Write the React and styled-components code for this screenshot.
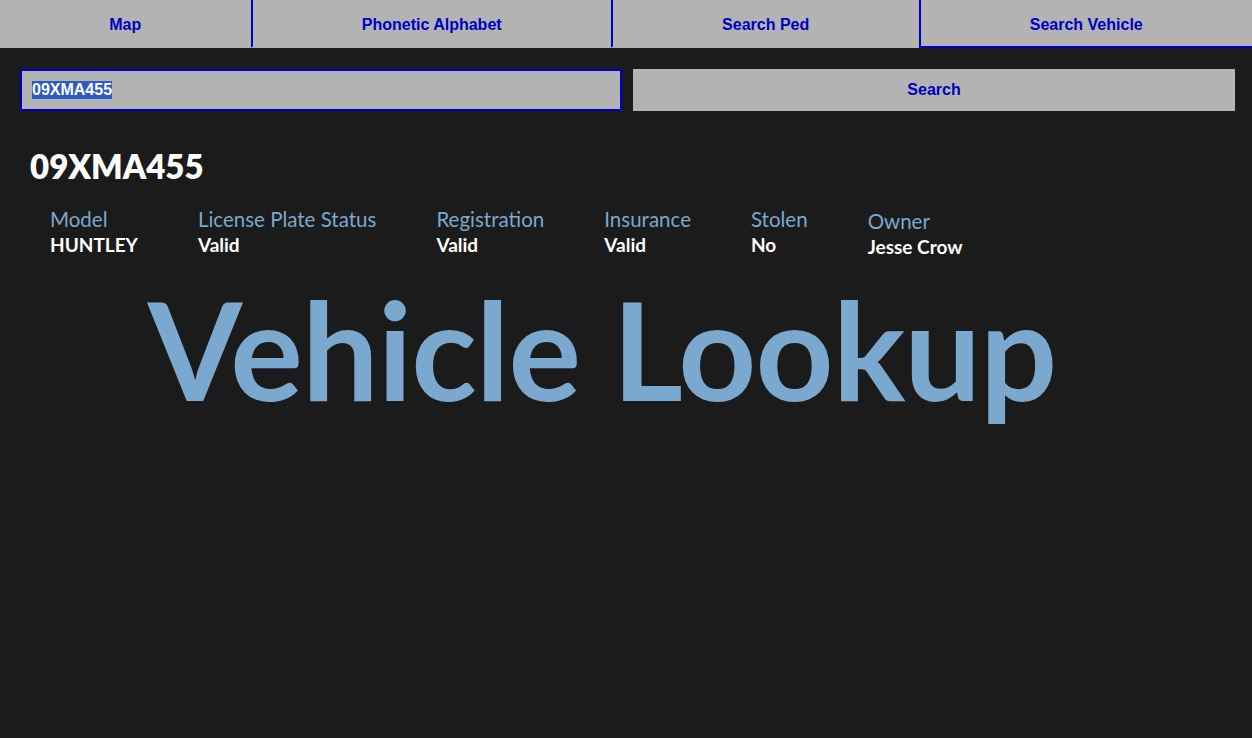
import React, { useEffect, useRef } from 'react';
import styled, { createGlobalStyle } from 'styled-components';

const GlobalStyle = createGlobalStyle`
  html, body {
    margin: 0;
    padding: 0;
    background: #1b1b1b;
  }
  * {
    box-sizing: border-box;
  }
`;

const blue = '#0000c4';
const grey = '#b3b3b3';
const steel = '#7aa8cf';

const Page = styled.div`
  min-height: 100vh;
  background: #1b1b1b;
  font-family: Lato, 'Open Sans', sans-serif;
  overflow: hidden;
`;

const TabBar = styled.nav`
  display: flex;
  height: 48px;
  background: ${grey};
`;

const Tab = styled.button`
  flex: 1 1 auto;
  height: 100%;
  padding: 4px 0 0;
  border: none;
  border-left: ${(p) => (p.$first ? 'none' : `2px solid ${blue}`)};
  border-bottom: 2px solid ${(p) => (p.$active ? blue : grey)};
  background: ${grey};
  color: ${blue};
  font-family: 'Liberation Sans', Arial, sans-serif;
  font-weight: bold;
  font-size: 16px;
  cursor: pointer;
`;

const SearchRow = styled.form`
  display: grid;
  grid-template-columns: 1fr 1fr;
  gap: 11px;
  padding: 0 17px 0 20px;
  margin-top: 21px;
`;

const PlateInput = styled.input`
  height: 42px;
  padding: 0 10px;
  border: 2px solid ${blue};
  outline: none;
  background: ${grey};
  color: #fff;
  font-family: 'Liberation Sans', Arial, sans-serif;
  font-weight: bold;
  font-size: 16px;
  &::selection {
    background: #3059c4;
    color: #fff;
  }
`;

const SearchButton = styled.button`
  height: 42px;
  border: none;
  background: ${grey};
  color: ${blue};
  font-family: 'Liberation Sans', Arial, sans-serif;
  font-weight: bold;
  font-size: 16px;
`;

const Plate = styled.h1`
  margin: 35px 0 0 30px;
  color: #fff;
  font-size: 33px;
  font-weight: 800;
  line-height: 40px;
`;

const Details = styled.div`
  display: flex;
  gap: 60px;
  padding-left: 50px;
  margin-top: 20px;
`;

const Field = styled.div`
  display: flex;
  flex-direction: column;
  margin-top: ${(p) => p.$offset || 0}px;
`;

const Label = styled.span`
  color: ${steel};
  font-size: 20.5px;
  line-height: 26px;
`;

const Value = styled.span`
  color: #fff;
  font-size: 19px;
  font-weight: 700;
  line-height: 26px;
`;

const Banner = styled.div`
  padding-right: 48px;
  margin-top: 9px;
  text-align: center;
  color: ${steel};
  font-size: 136px;
  font-weight: 700;
  letter-spacing: -1px;
  line-height: 160px;
`;

const tabs = ['Map', 'Phonetic Alphabet', 'Search Ped', 'Search Vehicle'];

const fields = [
  { label: 'Model', value: 'HUNTLEY' },
  { label: 'License Plate Status', value: 'Valid' },
  { label: 'Registration', value: 'Valid' },
  { label: 'Insurance', value: 'Valid' },
  { label: 'Stolen', value: 'No' },
  { label: 'Owner', value: 'Jesse Crow', offset: 2 },
];

export default function App() {
  const inputRef = useRef(null);

  useEffect(() => {
    if (inputRef.current) {
      inputRef.current.focus();
      inputRef.current.select();
    }
  }, []);

  return (
    <Page>
      <GlobalStyle />
      <TabBar>
        {tabs.map((t, i) => (
          <Tab key={t} $first={i === 0} $active={t === 'Search Vehicle'}>
            {t}
          </Tab>
        ))}
      </TabBar>
      <SearchRow onSubmit={(e) => e.preventDefault()}>
        <PlateInput ref={inputRef} defaultValue="09XMA455" />
        <SearchButton type="submit">Search</SearchButton>
      </SearchRow>
      <Plate>09XMA455</Plate>
      <Details>
        {fields.map((f) => (
          <Field key={f.label} $offset={f.offset}>
            <Label>{f.label}</Label>
            <Value>{f.value}</Value>
          </Field>
        ))}
      </Details>
      <Banner>Vehicle Lookup</Banner>
    </Page>
  );
}
